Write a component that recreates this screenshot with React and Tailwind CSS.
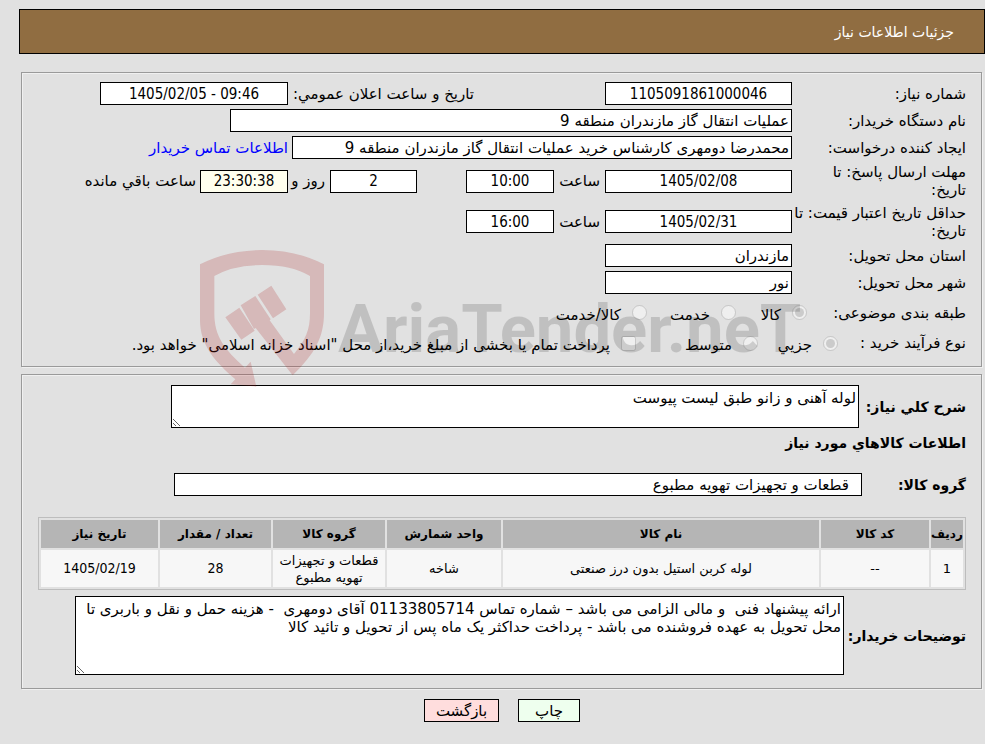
const box =
  "h-[23px] shrink-0 rounded-none border border-black px-[2px] text-black outline-none";

const numeric = "text-center font-['DejaVu_Sans_Condensed','DejaVu_Sans',sans-serif]";

function Row({ label, htmlFor, children, className = "min-h-[23px]" }) {
  return (
    <div className={`flex items-center ${className}`}>
      <label htmlFor={htmlFor} className="w-[174px] shrink-0 whitespace-pre-line leading-[18px]">
        {label}
      </label>
      {children}
    </div>
  );
}

function Field({ id, value, className, tone = "bg-white" }) {
  return (
    <input
      id={id}
      type="text"
      readOnly
      dir="auto"
      defaultValue={value}
      className={`${box} ${tone} ${className}`}
    />
  );
}

function Choice({ id, type = "radio", name, label, checked = false, className = "" }) {
  return (
    <span className={`flex items-center gap-[11px] ${className}`}>
      <input
        id={id}
        type={type}
        name={name}
        disabled
        defaultChecked={checked}
        className="size-[15px] shrink-0"
      />
      <label htmlFor={id} className="whitespace-nowrap pt-1">
        {label}
      </label>
    </span>
  );
}

function Watermark() {
  return (
    <svg
      aria-hidden="true"
      viewBox="0 0 620 140"
      className="pointer-events-none absolute left-[179px] top-[178px] h-[140px] w-[620px]"
    >
      <g transform="scale(.3333) translate(-45 -60)" fill="rgba(170,25,25,0.2)">
        <path d="M45 103Q130 60 232 60T417 103V250C417 320 390 372 323 436L212 294L207 297L167 226L211 198L257 268L254 271L327 372C362 330 375 300 375 250V138Q320 105 232 105T88 138V250C88 320 118 358 180 413L197 395L214 470L137 463L151 448C90 395 45 345 45 270Z" />
        <path d="M121 262L163 233L209 302L169 329ZM218 194L259 167L304 238L264 265Z" />
      </g>
      <text
        x="138"
        y="102"
        direction="ltr"
        fill="rgba(0,0,0,0.145)"
        className="font-[Roboto,'Liberation_Sans',sans-serif] text-[67px] font-bold"
      >
        AriaTender.neT
      </text>
    </svg>
  );
}

const columns = [
  { title: "ردیف", value: "1", width: "w-[32px]" },
  { title: "کد کالا", value: "--", width: "w-[108px]" },
  { title: "نام کالا", value: "لوله کربن استیل بدون درز صنعتی", width: "" },
  { title: "واحد شمارش", value: "شاخه", width: "w-[114px]" },
  { title: "گروه کالا", value: "قطعات و تجهیزات تهویه مطبوع", width: "w-[112px]" },
  { title: "تعداد / مقدار", value: "28", width: "w-[111px]", digits: true },
  { title: "تاریخ نیاز", value: "1405/02/19", width: "w-[117px]", digits: true },
];

const panel = "border border-[#9a9a9a] shadow-[1px_1px_0_#f0f0f0,inset_1px_1px_0_#f0f0f0] pr-[15px]";

export default function App() {
  return (
    <div
      dir="rtl"
      className="min-h-screen bg-[#e1e1e1] pt-[9px] pl-[19px] pb-5 font-['DejaVu_Sans',sans-serif] text-[15px] leading-[18px] text-black"
    >
      <header className="flex h-[45px] items-center border border-black bg-[#906d41] px-[30px] text-white">
        <h1 className="text-[14px]">جزئیات اطلاعات نیاز</h1>
      </header>

      <main className="relative mt-[18px] mr-[3px] ml-[2px]">
        <section className={`${panel} flex flex-col gap-1 pt-[9px] pb-[11px]`}>
          <Row label="شماره نیاز:" htmlFor="number">
            <Field id="number" value="1105091861000046" className={`w-[187px] ${numeric}`} />
            <label htmlFor="announced" className="mr-[131px] w-[186px] shrink-0 whitespace-nowrap">
              تاريخ و ساعت اعلان عمومي:
            </label>
            <Field id="announced" value="1405/02/05 - 09:46" className={`w-[188px] ${numeric}`} />
          </Row>
          <Row label="نام دستگاه خریدار:" htmlFor="buyer">
            <Field id="buyer" value="عملیات انتقال گاز مازندران منطقه 9" className="w-[562px]" />
          </Row>
          <Row label="ایجاد کننده درخواست:" htmlFor="creator">
            <Field
              id="creator"
              value="محمدرضا دومهری کارشناس خرید عملیات انتقال گاز مازندران منطقه 9"
              className="w-[500px]"
            />
            <a href="#contact" className="mr-1 whitespace-nowrap text-[#0000ff]">
              اطلاعات تماس خریدار
            </a>
          </Row>
          <Row label={"مهلت ارسال پاسخ: تا\nتاریخ:"} htmlFor="deadline" className="min-h-[36px]">
            <Field id="deadline" value="1405/02/08" className={`w-[187px] ${numeric}`} />
            <label htmlFor="deadline-time" className="w-[51px] shrink-0 pr-[5px]">
              ساعت
            </label>
            <Field id="deadline-time" value="10:00" className={`w-[88px] ${numeric}`} />
            <Field id="days-left" value="2" className={`mr-[49px] w-[87px] ${numeric}`} />
            <label htmlFor="days-left" className="w-[42px] shrink-0 pr-[5px] whitespace-nowrap">
              روز و
            </label>
            <Field
              id="time-left"
              value="23:30:38"
              tone="bg-[#ffffee]"
              className={`w-[88px] ${numeric}`}
            />
            <label htmlFor="time-left" className="mr-1 whitespace-nowrap">
              ساعت باقي مانده
            </label>
          </Row>
          <Row label={"حداقل تاریخ اعتبار قیمت: تا\nتاریخ:"} htmlFor="validity" className="min-h-[37px]">
            <Field id="validity" value="1405/02/31" className={`w-[187px] ${numeric}`} />
            <label htmlFor="validity-time" className="w-[51px] shrink-0 pr-[5px]">
              ساعت
            </label>
            <Field id="validity-time" value="16:00" className={`w-[88px] ${numeric}`} />
          </Row>
          <Row label="استان محل تحویل:" htmlFor="province">
            <Field id="province" value="مازندران" className="w-[187px]" />
          </Row>
          <Row label="شهر محل تحویل:" htmlFor="city">
            <Field id="city" value="نور" className="w-[187px]" />
          </Row>

          <div role="radiogroup" aria-label="طبقه بندی موضوعی" className="flex h-[29px] items-center">
            <span className="w-[159px] shrink-0">طبقه بندی موضوعی:</span>
            <Choice id="goods" name="subject" label="کالا" checked className="w-[71px]" />
            <Choice id="service" name="subject" label="خدمت" className="w-[89px]" />
            <Choice id="both" name="subject" label="کالا/خدمت" />
          </div>
          <div role="group" aria-label="نوع فرآیند خرید" className="flex h-[24px] items-center">
            <span className="w-[128px] shrink-0">نوع فرآیند خرید :</span>
            <Choice id="small" name="process" label="جزیي" checked className="w-[80px]" />
            <Choice id="medium" name="process" label="متوسط" className="w-[122px]" />
            <Choice
              id="treasury"
              type="checkbox"
              name="treasury"
              label='پرداخت تمام یا بخشی از مبلغ خرید،از محل "اسناد خزانه اسلامی" خواهد بود.'
            />
          </div>
        </section>

        <section className={`${panel} mt-[7px] pt-[10px] pb-[13px] pl-[16px]`}>
          <div className="flex items-center">
            <label htmlFor="summary" className="w-[107px] shrink-0 text-[14px] font-bold whitespace-nowrap">
              شرح كلي نیاز:
            </label>
            <textarea
              id="summary"
              readOnly
              defaultValue="لوله آهنی و زانو طبق لیست پیوست"
              className="h-[43px] w-[688px] border border-black bg-white px-[2px] py-[3px] outline-none"
            />
          </div>
          <h2 className="mt-[6px] text-[14px] font-bold">اطلاعات كالاهاي مورد نیاز</h2>
          <div className="mt-[21px] flex items-center">
            <label htmlFor="group" className="w-[104px] shrink-0 text-[14px] font-bold">
              گروه کالا:
            </label>
            <input
              id="group"
              type="text"
              readOnly
              defaultValue="قطعات و تجهیزات تهویه مطبوع"
              className="h-[23px] w-[688px] border border-black bg-white px-3 outline-none"
            />
          </div>

          <table className="mt-[21px] w-full table-fixed border-separate border-spacing-[2px] border border-[#bdbdbd] text-center text-[13px] leading-[17px]">
            <thead>
              <tr className="h-[28px] bg-[#b5b5b5]">
                {columns.map((c) => (
                  <th key={c.title} scope="col" className={`p-0 text-[12px] whitespace-nowrap ${c.width}`}>
                    {c.title}
                  </th>
                ))}
              </tr>
            </thead>
            <tbody>
              <tr className="h-[37px] bg-[#f7f7f7]">
                {columns.map((c) => (
                  <td key={c.title} className={`px-[2px] py-0 ${c.digits ? `${numeric} text-[14px]` : ""}`}>
                    {c.value}
                  </td>
                ))}
              </tr>
            </tbody>
          </table>

          <div className="mt-[6px] flex items-center">
            <label htmlFor="notes" className="w-[122px] shrink-0 text-[14px] font-bold whitespace-nowrap">
              توضیحات خریدار:
            </label>
            <textarea
              id="notes"
              readOnly
              defaultValue="ارائه پیشنهاد فنی  و مالی الزامی می باشد – شماره تماس 01133805714 آقای دومهری  - هزینه حمل و نقل و باربری تا محل تحویل به عهده فروشنده می باشد - پرداخت حداکثر یک ماه پس از تحویل و تائید کالا"
              className="h-[79px] w-[769px] border border-black bg-white px-[2px] py-[3px] outline-none"
            />
          </div>
        </section>

        <Watermark />
      </main>

      <div className="mt-[10px] flex justify-center gap-[19px]">
        <button type="button" className="h-[23px] w-[62px] border border-black bg-[#eeffee]">
          چاپ
        </button>
        <button type="button" className="h-[23px] w-[75px] border border-black bg-[#ffdddd]">
          بازگشت
        </button>
      </div>
    </div>
  );
}
